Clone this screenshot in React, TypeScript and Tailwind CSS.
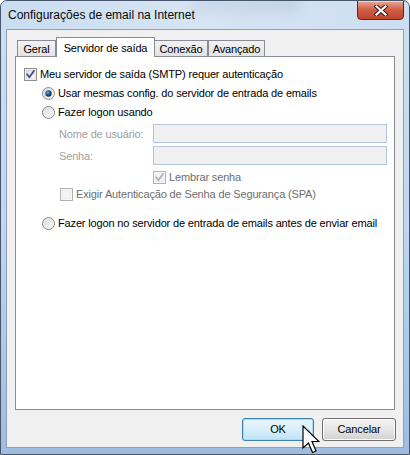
import React from "react";

const FONT = { fontFamily: '"Liberation Sans", Arial, sans-serif' };

function CheckBox({ checked, disabled }: { checked?: boolean; disabled?: boolean }) {
  const border = disabled ? "#b1b1b1" : "#8e8f8f";
  const mark = disabled ? "#b0b0b0" : "#3b4f86";
  return (
    <svg width="13" height="13" viewBox="0 0 13 13" className="shrink-0">
      <defs>
        <linearGradient id={disabled ? "cbgd" : "cbg"} x1="0" y1="0" x2="1" y2="1">
          <stop offset="0" stopColor={disabled ? "#f4f4f4" : "#dcdcdc"} />
          <stop offset="1" stopColor={disabled ? "#f4f4f4" : "#ffffff"} />
        </linearGradient>
      </defs>
      <rect x="0.5" y="0.5" width="12" height="12" fill="#fff" stroke={border} />
      <rect x="2" y="2" width="9" height="9" fill={`url(#${disabled ? "cbgd" : "cbg"})`} stroke={disabled ? "#e0e0e0" : "#c6c6c6"} strokeWidth="0.6" />
      {checked && (
        <path d="M3 6.3 L5.4 9.2 L10 2.8" fill="none" stroke={mark} strokeWidth="1.8" strokeLinecap="round" strokeLinejoin="round" />
      )}
    </svg>
  );
}

function Radio({ checked }: { checked?: boolean }) {
  return (
    <svg width="13" height="13" viewBox="0 0 13 13" className="shrink-0">
      <defs>
        <linearGradient id="rbg" x1="0" y1="0" x2="1" y2="1">
          <stop offset="0" stopColor="#d6d6d6" />
          <stop offset="1" stopColor="#ffffff" />
        </linearGradient>
        <radialGradient id="rdot" cx="0.4" cy="0.35" r="0.7">
          <stop offset="0" stopColor="#6fb2e6" />
          <stop offset="0.45" stopColor="#1f5c93" />
          <stop offset="1" stopColor="#0c2746" />
        </radialGradient>
      </defs>
      <circle cx="6.5" cy="6.5" r="6" fill="url(#rbg)" stroke="#8a8a8a" />
      <circle cx="6.5" cy="6.5" r="4.6" fill="none" stroke="#e8e8e8" strokeWidth="0.8" />
      {checked && <circle cx="6.5" cy="6.5" r="3.2" fill="url(#rdot)" />}
    </svg>
  );
}

function CloseButton() {
  return (
    <div className="w-[47px] h-[20px] -mt-px rounded-b-[4px] border border-[#5e271c] bg-gradient-to-b from-[#e6a898] via-[#cf5c44] to-[#c2442d] flex items-center justify-center shadow-[inset_0_1px_0_rgba(255,255,255,0.5)]">
      <svg width="14" height="11" viewBox="0 0 14 11">
        <path d="M2.5 1.5 L11.5 9.5 M11.5 1.5 L2.5 9.5" stroke="#3a1a14" strokeWidth="4.2" strokeLinecap="square" />
        <path d="M2.5 1.5 L11.5 9.5 M11.5 1.5 L2.5 9.5" stroke="#ffffff" strokeWidth="2.2" strokeLinecap="square" />
      </svg>
    </div>
  );
}

export default function App() {
  return (
    <div className="w-[410px] h-[455px] overflow-hidden bg-white text-black" style={FONT}>
      <div className="w-[410px] h-[455px] flex flex-col rounded-t-[7px] border border-[#47566a] bg-gradient-to-b from-[#cfe0f2] via-[#c0d6ee] to-[#9fbbde] relative overflow-hidden">
        {/* blurred glass smudge */}
        <div className="absolute left-[190px] top-[-6px] w-[110px] h-[18px] rounded-full bg-[#8fa6c2] opacity-50 blur-[6px]" />
        {/* title bar */}
        <div className="relative h-[28px] flex items-start justify-between pl-[7px] pr-[5px] bg-gradient-to-r from-[#c6dbf0]/60 via-[#dde9f5]/60 to-[#c9dcf0]/40">
          <span className="mt-[7px] text-[12px] leading-[15px] text-[#0a0a0a]">Configurações de email na Internet</span>
          <CloseButton />
        </div>
        {/* client area */}
        <div className="relative mx-[5px] h-[419px] border border-[#8aa0bb] bg-[#f0f0f0] flex flex-col">
          {/* tabs */}
          <div className="mt-[7px] ml-[10px] h-[19px] flex items-end text-[11px] tracking-[-0.15px]">
            <div className="w-[39px] h-[16px] border border-b-0 border-[#898c95] bg-gradient-to-b from-[#f2f2f2] to-[#e3e3e3] flex items-center justify-center leading-[14px] pt-[1px]">
              Geral
            </div>
            <div className="relative z-10 w-[99px] h-[20px] -mb-px border border-b-0 border-[#898c95] bg-white flex items-start justify-center pt-[3px] leading-[14px]">
              Servidor de saída
            </div>
            <div className="w-[53px] h-[16px] border border-b-0 border-l-0 border-[#898c95] bg-gradient-to-b from-[#f2f2f2] to-[#e3e3e3] flex items-center justify-center leading-[14px] pt-[1px]">
              Conexão
            </div>
            <div className="w-[57px] h-[16px] border border-b-0 border-[#898c95] bg-gradient-to-b from-[#f2f2f2] to-[#e3e3e3] flex items-center justify-center leading-[14px] pt-[1px]">
              Avançado
            </div>
          </div>
          {/* panel */}
          <div className="ml-[8px] w-[380px] h-[354px] border border-[#898c95] bg-white flex flex-col text-[11px] tracking-[-0.15px] leading-[14px]">
            <div className="mt-[9px] h-[16px] pl-[8px] flex items-center gap-[3px]">
              <CheckBox checked />
              <span>Meu servidor de saída (SMTP) requer autenticação</span>
            </div>
            <div className="mt-[3px] h-[16px] pl-[26px] flex items-center gap-[3px]">
              <Radio checked />
              <span>Usar mesmas config. do servidor de entrada de emails</span>
            </div>
            <div className="mt-[3px] h-[16px] pl-[26px] flex items-center gap-[3px]">
              <Radio />
              <span>Fazer logon usando</span>
            </div>
            <div className="mt-[4px] h-[19px] pl-[43px] flex items-center">
              <span className="w-[94px] text-[#a0a0a0]">Nome de usuário:</span>
              <div className="w-[234px] h-[19px] border border-[#b3c6dc] bg-[#f0f0f0]" />
            </div>
            <div className="mt-[3px] h-[19px] pl-[43px] flex items-center">
              <span className="w-[94px] text-[#a0a0a0]">Senha:</span>
              <div className="w-[234px] h-[19px] border border-[#b3c6dc] bg-[#f0f0f0]" />
            </div>
            <div className="mt-[4px] h-[16px] pl-[137px] flex items-center gap-[3px]">
              <CheckBox checked disabled />
              <span className="text-[#6d6d6d]">Lembrar senha</span>
            </div>
            <div className="mt-[1px] h-[16px] pl-[44px] flex items-center gap-[3px]">
              <CheckBox disabled />
              <span className="text-[#6d6d6d]">Exigir Autenticação de Senha de Segurança (SPA)</span>
            </div>
            <div className="mt-[13px] h-[16px] pl-[26px] flex items-center gap-[3px]">
              <Radio />
              <span>Fazer logon no servidor de entrada de emails antes de enviar email</span>
            </div>
          </div>
          {/* buttons */}
          <div className="mt-[8px] pr-[7px] flex justify-end gap-[8px] text-[11px] tracking-[-0.15px]">
            <div className="w-[72px] h-[23px] rounded-[3px] border border-[#3c7fb1] bg-gradient-to-b from-[#e8f5fc] via-[#d9effb] to-[#bfe3f7] shadow-[inset_0_0_0_1px_#a6dcf6] flex items-center justify-center">
              OK
            </div>
            <div className="w-[74px] h-[23px] rounded-[3px] border border-[#707070] bg-gradient-to-b from-[#f3f3f3] via-[#e6e6e6] to-[#d0d0d0] shadow-[inset_0_0_0_1px_#fbfbfb] flex items-center justify-center">
              Cancelar
            </div>
          </div>
        </div>
        {/* cursor */}
        <svg className="absolute left-[301px] top-[424px]" width="18" height="30" viewBox="0 0 18 30">
          <path d="M1 1 L1 23 L6.5 18 L10.5 27.5 L14 26 L10 16.5 L17 16.5 Z" fill="#ffffff" stroke="#000000" strokeWidth="1.2" strokeLinejoin="miter" />
        </svg>
      </div>
    </div>
  );
}
